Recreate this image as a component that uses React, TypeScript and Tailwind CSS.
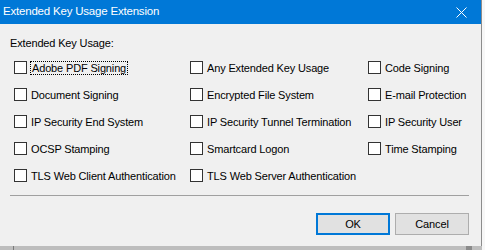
const options = [
  'Adobe PDF Signing',
  'Any Extended Key Usage',
  'Code Signing',
  'Document Signing',
  'Encrypted File System',
  'E-mail Protection',
  'IP Security End System',
  'IP Security Tunnel Termination',
  'IP Security User',
  'OCSP Stamping',
  'Smartcard Logon',
  'Time Stamping',
  'TLS Web Client Authentication',
  'TLS Web Server Authentication',
];

const App = () => {
  return (
    <div
      className="w-[485px] h-[250px] bg-[#f7f7f7] overflow-hidden text-[11px] tracking-[-0.15px] text-black"
      style={{ fontFamily: '"Liberation Sans", Arial, sans-serif' }}
    >
      {/* Dialog window */}
      <div className="w-[482px] h-[246px] flex flex-col bg-[#f0f0f0] border-r border-[#8c8c8c]">
        {/* Title bar */}
        <div className="h-[24px] bg-[#0078d7] text-white text-[11.5px] tracking-[-0.2px] flex items-center pl-[3px] pr-[14px] shrink-0">
          <span className="flex-1 leading-none whitespace-nowrap">Extended Key Usage Extension</span>
          <svg width="11" height="11" viewBox="0 0 11 11" className="block">
            <path d="M0.5 0.5 L10.5 10.5 M10.5 0.5 L0.5 10.5" stroke="white" strokeWidth="1" />
          </svg>
        </div>

        {/* Body */}
        <div className="flex flex-col pt-[11px] pl-[10px]">
          <div className="h-[16px] leading-[16px] whitespace-nowrap">Extended Key Usage:</div>

          <div className="grid grid-cols-[176px_178px_1fr] mt-[3px] pl-[4px]">
            {options.map((label, i) => (
              <div key={label} className="h-[27px] flex items-center whitespace-nowrap">
                <span className="w-[13px] h-[13px] border border-[#333333] bg-white shrink-0" />
                {i === 0 ? (
                  <span className="ml-[3px] px-[1px] h-[14px] leading-[12px] border border-dotted border-black">
                    {label}
                  </span>
                ) : (
                  <span className="ml-[4px] leading-[14px]">{label}</span>
                )}
              </div>
            ))}
          </div>

          {/* Separator */}
          <div className="mt-[6px] w-[459px] h-px bg-[#a0a0a0]" />

          {/* Buttons */}
          <div className="flex justify-end gap-[5px] mt-[17px] w-[459px]">
            <button className="w-[74px] h-[22px] bg-[#e1e1e1] border-2 border-[#0078d7] flex items-center justify-center">
              OK
            </button>
            <button className="w-[74px] h-[22px] bg-[#e1e1e1] border border-[#adadad] flex items-center justify-center">
              Cancel
            </button>
          </div>
        </div>
      </div>

      {/* Taskbar strip behind the dialog */}
      <div className="w-[482px] h-[4px] bg-[#bdbdbd] flex">
        <div className="ml-[13px] w-[1px] h-full bg-[#7a7a7a]" />
        <div className="ml-[452px] w-[6px] h-full bg-[#8a8a8a]" />
      </div>
    </div>
  );
};

export default App;
